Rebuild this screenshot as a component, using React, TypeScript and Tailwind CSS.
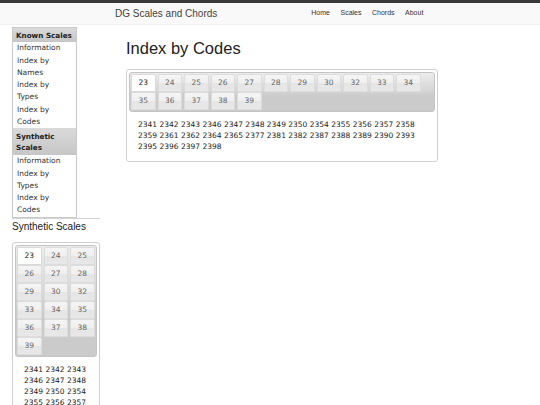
import React from 'react';

const codeTabs = ['23', '24', '25', '26', '27', '28', '29', '30', '32', '33', '34', '35', '36', '37', '38', '39'];

const codeNumbers = [
  2341, 2342, 2343, 2346, 2347, 2348, 2349, 2350, 2354, 2355, 2356, 2357, 2358, 2359, 2361, 2362, 2364, 2365, 2377,
  2381, 2382, 2387, 2388, 2389, 2390, 2393, 2395, 2396, 2397, 2398,
];

const verdana = { fontFamily: '"DejaVu Sans", Verdana, sans-serif' };
const arial = { fontFamily: '"Liberation Sans", Arial, sans-serif' };

interface TabsBoxProps {
  width: string;
}

// jQuery-UI looking tab widget: gray header with glossy tabs, numbers below
const TabsBox: React.FC<TabsBoxProps> = ({ width }) => (
  <div className={`${width} border border-[#cfcfcf] rounded-[3px] p-[2px] bg-white`} style={verdana}>
    <div className="rounded-[3px] border border-[#c4c4c4] p-[1px] bg-[linear-gradient(to_bottom,#ececec_0%,#d6d6d6_45%,#cbcbcb_60%,#cbcbcb_100%)]">
      <div className="flex flex-wrap gap-x-[2px]">
        {codeTabs.map((t, i) => (
          <div
            key={t}
            className={
              i === 0
                ? 'w-[24.5px] h-[18px] flex items-center justify-center text-[7.5px] text-[#222] bg-white border border-[#dadada] rounded-t-[2px]'
                : 'w-[24.5px] h-[18px] flex items-center justify-center text-[7.5px] text-[#666] border border-[#dcdcdc] rounded-t-[2px] bg-[linear-gradient(to_bottom,#f5f5f5_0%,#efefef_50%,#e5e5e5_51%,#e8e8e8_100%)]'
            }
          >
            {t}
          </div>
        ))}
      </div>
    </div>
    <div className="px-[9px] pt-[7px] pb-[7px] text-[7.5px] leading-[11px] text-[#222]">
      {codeNumbers.join(' ')}
    </div>
  </div>
);

const MenuHeader: React.FC<{ children: React.ReactNode; tall?: boolean }> = ({ children, tall }) => (
  <div
    className={`px-[3px] text-[7.2px] leading-[11px] font-bold text-[#222] bg-[linear-gradient(to_bottom,#dadada,#c6c6c6)] ${
      tall ? 'py-[2.5px]' : 'py-[1.5px] whitespace-nowrap'
    }`}
  >
    {children}
  </div>
);

const MenuItem: React.FC<{ children: React.ReactNode }> = ({ children }) => (
  <div className="px-[4px] py-[0.25px] text-[7.5px] leading-[12px] text-[#333]">{children}</div>
);

export default function App() {
  return (
    <div className="w-[540px] h-[405px] overflow-hidden bg-white">
      <div className="h-[3px] bg-[#3a3a3a]" />
      <header className="h-[22px] bg-[#f9f9f9] border-b border-[#f0f0f0] flex items-center" style={arial}>
        <div className="ml-[115px] text-[10px] text-[#444]">DG Scales and Chords</div>
        <nav className="ml-[94px] flex gap-[10.5px] text-[7px] text-[#333]">
          <span>Home</span>
          <span>Scales</span>
          <span>Chords</span>
          <span>About</span>
        </nav>
      </header>

      <div className="flex">
        <aside className="ml-[12px] w-[88px] pt-[2px] shrink-0">
          <div className="w-[65px] border border-[#c9c9c9] bg-white" style={verdana}>
            <MenuHeader>Known Scales</MenuHeader>
            <MenuItem>Information</MenuItem>
            <MenuItem>Index by Names</MenuItem>
            <MenuItem>Index by Types</MenuItem>
            <MenuItem>Index by Codes</MenuItem>
            <MenuHeader tall>Synthetic Scales</MenuHeader>
            <MenuItem>Information</MenuItem>
            <MenuItem>Index by Types</MenuItem>
            <MenuItem>Index by Codes</MenuItem>
          </div>
          <div className="border-t border-[#d4d4d4]">
            <h2 className="text-[10px] leading-[16px] text-[#222] mb-[7px]" style={arial}>
              Synthetic Scales
            </h2>
            <TabsBox width="w-[88px]" />
          </div>
        </aside>

        <main className="ml-[26px] pt-[14px]">
          <h1 className="text-[16.5px] leading-[19px] text-[#222] mb-[11px]" style={arial}>
            Index by Codes
          </h1>
          <TabsBox width="w-[312px]" />
        </main>
      </div>
    </div>
  );
}
